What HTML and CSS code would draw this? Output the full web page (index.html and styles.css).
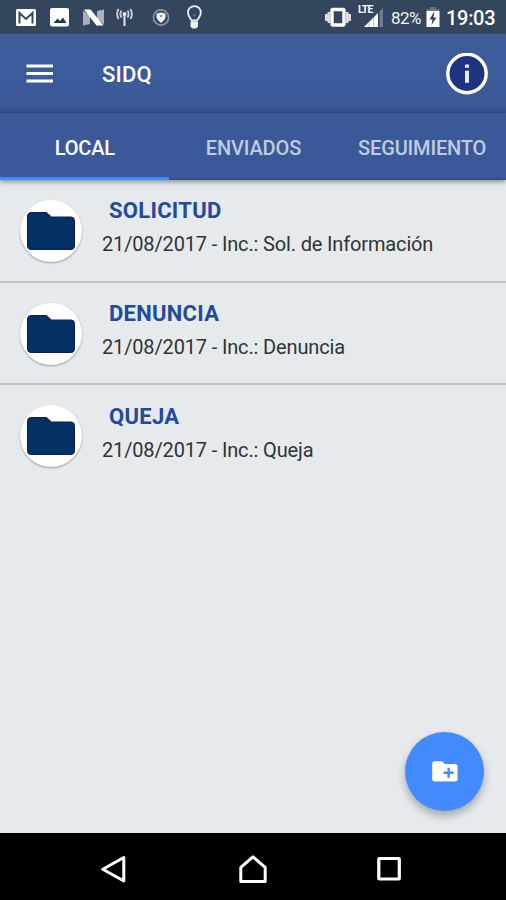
FILE: index.html
```html
<!DOCTYPE html>
<html lang="es">
<head>
<meta charset="utf-8">
<meta name="viewport" content="width=device-width">
<title>SIDQ</title>
<link rel="stylesheet" href="styles.css">
</head>
<body>
<div class="screen">
  <header class="status">
    <div class="notifications">
      <svg width="21" height="34" viewBox="0 0 21 34"><rect x="0" y="9" width="20" height="17" rx="1.5" fill="#fff"/><path d="M3.500 23.500V13l6.500 6 6.500-6v10.500" fill="none" stroke="#34465d" stroke-width="2"/></svg>
      <svg width="20" height="34" viewBox="0 0 20 34"><rect x="0" y="8" width="19" height="18.500" rx="2" fill="#fff"/><path d="M3.500 23l4-4.500 2.500 2.500 3-3.500 3.500 5.500z" fill="#24364e"/></svg>
      <svg width="22" height="34" viewBox="0 0 22 34"><path d="M0 10.500l7 5.500v8l-7 1.500zM14 11l7-1.500v15l-7-6z" fill="#a9b1bd"/><path d="M1 9.500h6.500l13 16h-7z" fill="#fff"/></svg>
      <svg width="17" height="34" viewBox="0 0 17 34"><path d="M8.500 14v12" stroke="#e3e7ec" stroke-width="2"/><circle cx="8.500" cy="14" r="2" fill="#e3e7ec"/><g fill="none" stroke="#cbd1d9" stroke-width="1.800"><path d="M5.500 10.500q-2.200 3.500 0 7M2.600 9q-3 5 0 10M11.500 10.500q2.200 3.500 0 7M14.400 9q3 5 0 10"/></g></svg>
      <svg width="18" height="34" viewBox="0 0 18 34"><circle cx="9" cy="17.500" r="7.600" fill="none" stroke="#8c97a6" stroke-width="1.600"/><path d="M9 12.500l4.500 1v4q-.8 3-4.500 5.500-3.700-2.500-4.500-5.500v-4z" fill="#f4f6f8"/><circle cx="9" cy="16" r="1.100" fill="#6d7b8d"/></svg>
      <svg width="15" height="34" viewBox="0 0 15 34"><path d="M4.800 20.500Q1 15.500 1 12.500a6.400 6.400 0 0 1 12.800 0q0 3-3.800 8z" fill="none" stroke="#eef1f4" stroke-width="1.800"/><path d="M3.500 21.500h7.500v5l-1.800 2H5.300l-1.800-2z" fill="#eef1f4"/><path d="M6 14.500l1.400 1.500L9 14.500" fill="none" stroke="#8c97a6"/></svg>
    </div>
    <div class="system">
      <svg width="26" height="34" viewBox="0 0 26 34"><path d="M1.200 14v7M3.800 12v11M22.200 12v11M24.800 14v7" stroke="#d9dde3" stroke-width="2.600"/><rect x="7" y="9.500" width="12" height="15.500" rx="1" fill="#34465d" stroke="#fff" stroke-width="3.400"/></svg>
      <div class="signal">
        <span class="lte">LTE</span>
        <svg width="26" height="34" viewBox="0 0 26 34"><path d="M6 27L20 13v14z" fill="#fff"/><path d="M21.500 11.500L25 8v19h-3.500z" fill="#6f7c8d"/><path d="M11 22v5M15.500 18v9" stroke="#bcc3cc"/></svg>
      </div>
      <span class="percent">82%</span>
      <svg class="battery" width="14" height="34" viewBox="0 0 14 34"><path d="M4 7h6v2h3.500v3H.5V9H4z" fill="#66768a"/><path d="M.5 11h13v16H.5z" fill="#fff"/><path d="M8.500 11L3.500 19.500h3L5.500 25l5-7.500h-3z" fill="#34465d"/></svg>
      <time class="clock">19:03</time>
    </div>
  </header>
  <div class="toolbar">
    <svg class="menu" width="27" height="20" viewBox="0 0 27 20"><path d="M.5 2h26.500M.5 9.500h26.500M.5 17h26.500" stroke="#fff" stroke-width="3.200"/></svg>
    <h1 class="title">SIDQ</h1>
    <svg class="info" width="42" height="42" viewBox="0 0 42 42"><circle cx="21" cy="20.500" r="19.200" fill="#1f3480" stroke="#fff" stroke-width="3.400"/><path d="M19 11.500h4v3.200h-4zM19 17.700h4v12h-4z" fill="#e8ebf5"/></svg>
  </div>
  <nav class="tabs">
    <div class="tab active"><span>LOCAL</span></div>
    <div class="tab"><span>ENVIADOS</span></div>
    <div class="tab"><span>SEGUIMIENTO</span></div>
  </nav>
  <main class="list">
    <article class="row">
      <div class="avatar"><svg width="48" height="38" viewBox="0 0 48 38"><path d="M4 .5h15.500l5 4.500H44q3.500 0 3.500 3.500v25.500q0 3.500-3.500 3.500H4Q.5 37.500.5 34V4Q.5.5 4 .5z" fill="#043164" stroke="#101a5c"/></svg></div>
      <div class="text"><h2>SOLICITUD</h2><p>21/08/2017 - Inc.: Sol. de Información</p></div>
    </article>
    <article class="row">
      <div class="avatar"><svg width="48" height="38" viewBox="0 0 48 38"><path d="M4 .5h15.500l5 4.500H44q3.500 0 3.500 3.500v25.500q0 3.500-3.500 3.500H4Q.5 37.500.5 34V4Q.5.5 4 .5z" fill="#043164" stroke="#101a5c"/></svg></div>
      <div class="text"><h2>DENUNCIA</h2><p>21/08/2017 - Inc.: Denuncia</p></div>
    </article>
    <article class="row">
      <div class="avatar"><svg width="48" height="38" viewBox="0 0 48 38"><path d="M4 .5h15.500l5 4.500H44q3.500 0 3.500 3.500v25.500q0 3.500-3.500 3.500H4Q.5 37.500.5 34V4Q.5.5 4 .5z" fill="#043164" stroke="#101a5c"/></svg></div>
      <div class="text"><h2>QUEJA</h2><p>21/08/2017 - Inc.: Queja</p></div>
    </article>
    <div class="fab"><svg width="26" height="21" viewBox="0 0 26 21"><path d="M2.500.3H10L12.700 3H23q2.500 0 2.500 2.500v12.700q0 2.300-2.500 2.300H2.500Q.2 20.500.2 18.200V2.600Q.2.300 2.500.3z" fill="#fff"/><path d="M16.600 6.800v10M11.600 11.800h10" stroke="#448aff" stroke-width="2.400"/></svg></div>
  </main>
  <footer class="navbar">
    <svg width="26" height="28" viewBox="0 0 26 28"><path d="M22.800 2.500v23.500L1.800 14.200z" fill="none" stroke="#fff" stroke-width="3" stroke-linejoin="round"/></svg>
    <svg width="28" height="28" viewBox="0 0 28 28"><path d="M1.800 12.400L14 1.800l12.200 10.600v14H1.800z" fill="none" stroke="#fff" stroke-width="3" stroke-linejoin="round"/></svg>
    <svg width="25" height="28" viewBox="0 0 25 28"><rect x="1.800" y="3.500" width="20.500" height="20.500" rx=".5" fill="none" stroke="#fff" stroke-width="3.200"/></svg>
  </footer>
</div>
</body>
</html>
```

FILE: styles.css
```css
* { box-sizing: border-box; margin: 0; }
body { font-family: Roboto, "Liberation Sans", sans-serif; }
svg { display: block; flex: none; }
.screen { width: 506px; height: 900px; display: flex; flex-direction: column; overflow: hidden; background: #e6eaed; }

.status { height: 34px; flex: none; display: flex; justify-content: space-between; background: #34465d; color: #fff; }
.notifications { display: flex; padding-left: 16px; }
.notifications svg { margin-right: 13px; }
.notifications svg:nth-child(3) { margin-right: 11px; }
.notifications svg:nth-child(4) { margin-right: 19px; }
.notifications svg:nth-child(5) { margin-right: 17px; }
.system { display: flex; align-items: center; padding-right: 11px; }
.signal { position: relative; margin-left: 7px; }
.lte { position: absolute; left: 0; top: 4px; font-size: 10.500px; line-height: 11px; font-weight: 700; letter-spacing: -0.7px; }
.percent { width: 31px; margin-left: 7px; font-size: 17px; line-height: 34px; letter-spacing: -0.6px; padding-top: 2px; white-space: nowrap; color: #f0f2f5; }
.battery { margin-left: 4px; }
.clock { width: 49px; margin-left: 6px; font-size: 20px; line-height: 34px; font-weight: 500; letter-spacing: -0.3px; padding-top: 2px; white-space: nowrap; }

.toolbar { height: 79px; flex: none; display: flex; align-items: center; padding: 0 18px 0 26px; background: linear-gradient(#3c5c9c, #3b5998 70px, #385390 76px, #304b82); color: #fff; }
.title { flex: 1; margin-left: 49px; font-size: 22px; line-height: 28px; font-weight: 500; letter-spacing: 0.2px; padding-top: 2px; }

.tabs { height: 67px; flex: none; display: grid; grid-template-columns: repeat(3, 1fr); background: #3b5998; box-shadow: 0 2px 5px rgba(0, 0, 0, .4); position: relative; z-index: 1; }
.tab { display: flex; align-items: center; justify-content: center; font-size: 20px; font-weight: 500; letter-spacing: -0.15px; color: #c0cbe3; border-bottom: 2px solid #304f8c; padding: 4px 0 0 1px; white-space: nowrap; }
.tab.active { color: #fff; border-bottom: 3px solid #448aff; padding-top: 5px; }

.list { flex: 1; position: relative; }
.row { height: 102.500px; display: flex; padding: 20px 0 0 20px; border-bottom: 2px solid #bfc2c6; }
.row:nth-child(3) { border-bottom: 0; }
.avatar { width: 62px; height: 62px; display: flex; align-items: center; justify-content: center; border-radius: 50%; background: #fff; box-shadow: 0 1px 2px rgba(0, 0, 0, .35); flex: none; }
.text { margin-left: 20px; }
.text h2 { font-size: 22px; line-height: 26px; font-weight: 700; letter-spacing: 0.28px; color: #224b99; margin: -2px 0 0 7px; }
.text p { font-size: 20px; line-height: 26px; letter-spacing: -0.15px; color: #303336; margin-top: 7px; white-space: nowrap; }
.row:nth-child(3) .text { padding-top: 1px; }
.fab { position: absolute; right: 22px; bottom: 22px; width: 79px; height: 79px; display: flex; align-items: center; justify-content: center; border-radius: 50%; background: #448aff; box-shadow: 0 5px 9px rgba(0, 0, 0, .28); }

.navbar { height: 67px; flex: none; display: flex; align-items: center; padding: 4px 104px 0 101px; justify-content: space-between; background: #000; }
.navbar svg:nth-child(2) { margin-left: 2px; }
```
